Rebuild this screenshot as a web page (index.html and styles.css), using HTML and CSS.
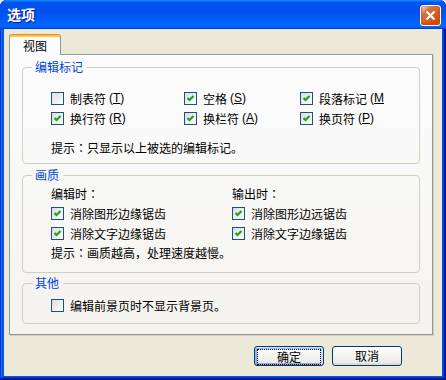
FILE: index.html
```html
<!DOCTYPE html>
<html lang="zh-CN">
<head>
    <meta charset="UTF-8">
    <meta name="viewport" content="width=device-width, initial-scale=1.0">
    <title>选项</title>

    <link rel="stylesheet" href="styles.css">

</head>
<body>

    <div class="window">
        <div class="titlebar">
            <span class="title">选项</span>
            <button type="button" class="close">
                <svg width="11" height="11" viewBox="0 0 11 11">
                    <path d="M1.5 1.5 L9.5 9.5 M9.5 1.5 L1.5 9.5" stroke="#fff" stroke-width="2.2" fill="none"/>
                </svg>
            </button>
        </div>

        <div class="client">
            <div class="tabs">
                <div class="tab">视图</div>
            </div>

            <div class="panel">
                <fieldset class="group marks">
                    <legend>编辑标记</legend>
                    <div class="grid3">
                        <label class="check"><span class="box"></span>制表符<span class="key">(<u>T</u>)</span></label>
                        <label class="check"><span class="box on"></span>空格<span class="key">(<u>S</u>)</span></label>
                        <label class="check"><span class="box on"></span>段落标记<span class="key">(<u>M</u></span></label>
                        <label class="check"><span class="box on"></span>换行符<span class="key">(<u>R</u>)</span></label>
                        <label class="check"><span class="box on"></span>换栏符<span class="key">(<u>A</u>)</span></label>
                        <label class="check"><span class="box on"></span>换页符<span class="key">(<u>P</u>)</span></label>
                    </div>
                    <p class="hint marks-hint">提示<span class="colon" lang="zh-TW">：</span>只显示以上被选的编辑标记。</p>
                </fieldset>

                <fieldset class="group quality">
                    <legend>画质</legend>
                    <div class="grid2">
                        <div class="row">编辑时<span class="colon" lang="zh-TW">：</span></div>
                        <div class="row">输出时<span class="colon" lang="zh-TW">：</span></div>
                        <label class="check"><span class="box on"></span>消除图形边缘锯齿</label>
                        <label class="check"><span class="box on"></span>消除图形边远锯齿</label>
                        <label class="check"><span class="box on"></span>消除文字边缘锯齿</label>
                        <label class="check"><span class="box on"></span>消除文字边缘锯齿</label>
                    </div>
                    <p class="hint">提示<span class="colon" lang="zh-TW">：</span>画质越高，处理速度越慢。</p>
                </fieldset>

                <fieldset class="group other">
                    <legend>其他</legend>
                    <label class="check"><span class="box"></span>编辑前景页时不显示背景页。</label>
                </fieldset>
            </div>

            <div class="buttons">
                <button type="button" class="btn default"><span>确定</span></button>
                <button type="button" class="btn">取消</button>
            </div>
        </div>
    </div>

</body>
</html>
```

FILE: styles.css
```css
body{
    margin: 0;
    font-family: "Noto Sans CJK SC", sans-serif;
    font-size: 12px;
    color: #000;
    background: #ece9d8;
    text-autospace: no-autospace;
    text-spacing-trim: space-all;
}

.window{
    width: 446px;
    height: 380px;
    display: flex;
    flex-direction: column;
    background: #0055ea;
    border-radius: 7px 7px 0 0;
    overflow: hidden;
    box-shadow: inset -1px -1px #00138c, inset 1px 1px #0831d9,
                inset -2px -2px #001ea0, inset 2px 2px #166aee,
                inset -3px -3px #003bda, inset 3px 3px #0855dd;
}

/* title bar */
.titlebar{
    height: 29px;
    flex: none;
    display: flex;
    align-items: center;
    justify-content: space-between;
    padding: 0 5px 0 7px;
    box-sizing: border-box;
    background: linear-gradient(180deg, #0997ff, #0053ee 8%, #0050ee 40%, #0066ff 88%, #0066ff 93%, #005bff 95%, #003dd7 96%, #003dd7);
}

.title{
    color: #fff;
    font-weight: bold;
    font-size: 14px;
    line-height: 15px;
    text-shadow: 1px 1px #0f1089;
}

.close{
    width: 21px;
    height: 21px;
    padding: 0;
    margin-top: 1px;
    border: 1px solid #fff;
    border-radius: 3px;
    display: flex;
    align-items: center;
    justify-content: center;
    background: radial-gradient(circle at 90% 90%, #cc4600 0%, #dc6527 55%, #cd7546 70%, #ffccb2 90%, #fff 100%);
    box-shadow: inset 0 -1px 2px 1px #da4600;
}

/* client area */
.client{
    flex: 1;
    margin: 0 4px 4px;
    background: #ece9d8;
    padding: 5px 9px 0 5px;
}

.tabs{
    display: flex;
    height: 20px;
}

.tab{
    position: relative;
    z-index: 1;
    width: 52px;
    height: 21px;
    box-sizing: border-box;
    border: 1px solid #919b9c;
    border-top: 1px solid #e68b2c;
    border-bottom: none;
    border-radius: 3px 3px 0 0;
    background: #fcfcfe;
    box-shadow: inset 0 2px #ffc83c;
    text-align: center;
    line-height: 19px;
    padding-top: 1px;
}

.panel{
    border: 1px solid #919b9c;
    background: linear-gradient(180deg, #fcfcfe, #f4f3ee);
    padding: 5px 12px 10px;
    box-shadow: 1px 1px 0 #d0cebf;
}

/* groups */
.group{
    margin: 0;
    padding: 0 0 5px 28px;
    border: 1px solid #d0d0bf;
    border-radius: 4px;
    min-width: 0;
}

.group legend{
    margin-left: -19px;
    padding: 0 4px 0 3px;
    color: #0046d5;
    line-height: 14px;
}

.quality{
    margin-top: 4px;
    padding-top: 1px;
    padding-bottom: 9px;
}

.other{
    margin-top: 3px;
    padding-top: 5px;
    padding-bottom: 8px;
}

.grid3{
    display: grid;
    grid-template-columns: 133px 116px 1fr;
    grid-auto-rows: 20px;
    margin-top: 14px;
}

.grid2{
    display: grid;
    grid-template-columns: 181px 1fr;
    grid-auto-rows: 20px;
}

.row{
    display: flex;
    align-items: center;
}

.colon{
    font-family: "Noto Sans CJK TC", "Noto Sans CJK SC", sans-serif;
}

.key{
    font-family: "Liberation Sans", sans-serif;
    margin-left: 3px;
}

.check{
    display: flex;
    align-items: center;
    gap: 6px;
    height: 20px;
    white-space: nowrap;
    overflow: hidden;
}

.check .key{
    margin-left: -3px;
}

.box{
    width: 13px;
    height: 13px;
    flex: none;
    box-sizing: border-box;
    border: 1px solid #1c5180;
    background: linear-gradient(135deg, #dcdcd7, #fff);
}

.box.on{
    background: url("data:image/svg+xml,%3Csvg xmlns='http://www.w3.org/2000/svg' width='11' height='11'%3E%3Cpath d='M2.5 5 L4.5 7 L8.5 3' stroke='%2321a121' stroke-width='2.2' fill='none'/%3E%3C/svg%3E") no-repeat center, linear-gradient(135deg, #dcdcd7, #fff);
}

.hint{
    margin: 0;
    line-height: 20px;
}

.marks-hint{
    margin-top: 10px;
}

/* buttons */
.buttons{
    display: flex;
    justify-content: flex-end;
    gap: 8px;
    margin-top: 11px;
    padding-right: 31px;
}

.btn{
    width: 70px;
    height: 20px;
    padding: 0;
    font-family: inherit;
    font-size: 12px;
    border: 1px solid #003c74;
    border-radius: 3px;
    background: linear-gradient(180deg, #fff, #ecebe6 86%, #d6d0c5);
    line-height: 18px;
}

.btn.default{
    box-shadow: inset -1px 1px #cee7ff, inset 1px 2px #98b8ea, inset -2px 2px #bcd4f6, inset 1px -1px #89ade4, inset 2px -2px #89ade4;
}

.btn.default span{
    display: block;
    margin: 2px;
    line-height: 12px;
    height: 12px;
    padding: 1px 0;
    border: 1px dotted #000;
}
```
